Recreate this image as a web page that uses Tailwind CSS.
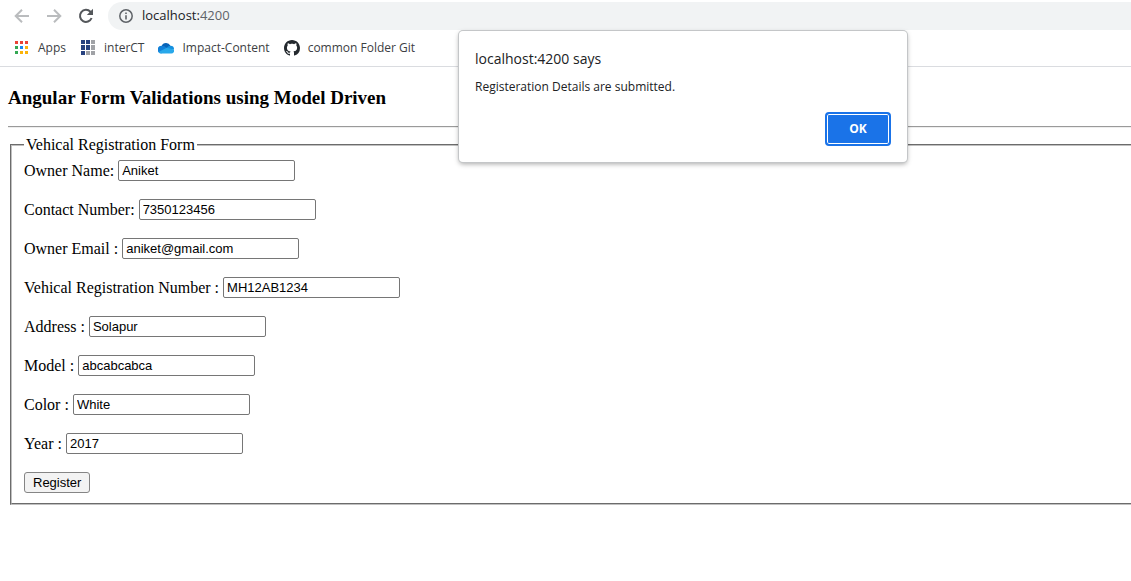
<!DOCTYPE html>
<html lang="en">
<head>
<meta charset="utf-8">
<title>localhost:4200</title>
<script src="https://cdn.jsdelivr.net/npm/@tailwindcss/browser@4"></script>
</head>
<body class="bg-white text-black overflow-x-hidden">
<header class="border-b border-[#dadce0] font-['Segoe_UI','Open_Sans',sans-serif] text-xs text-[#3c4043]">
  <nav class="flex items-center pt-0.5 pl-3.5" aria-label="Browser toolbar">
    <button class="mr-4 size-4" aria-label="Back"><svg viewBox="0 0 16 16" class="size-4 fill-none stroke-[#babcbe] stroke-2"><path d="M15 8H2M8 1.7L1.7 8L8 14.3"/></svg></button>
    <button class="mr-4 size-4" aria-label="Forward"><svg viewBox="0 0 16 16" class="size-4 fill-none stroke-[#babcbe] stroke-2"><path d="M1 8H14M8 1.7L14.3 8L8 14.3"/></svg></button>
    <button class="mr-3.5 size-4" aria-label="Reload"><svg viewBox="0 0 16 16" class="size-4"><path d="M13.6 10A6 6 0 1 1 12.4 3.8L13.2 4.8" fill="none" stroke="#54575b" stroke-width="2"/><path d="M15 .8V7H8.8Z" fill="#54575b"/></svg></button>
    <div class="flex h-7 flex-1 items-center gap-2 rounded-l-full bg-[#f1f3f4] pl-2.5">
      <svg viewBox="0 0 16 16" class="size-4" aria-hidden="true"><circle cx="8" cy="8" r="6.2" fill="none" stroke="#5f6368" stroke-width="1.5"/><path d="M7.2 7.2h1.6v4.3H7.2zM7.2 4.4h1.6V6H7.2z" fill="#5f6368"/></svg>
      <span class="text-[13px] text-[#202124]">localhost:<span class="text-[#5f6368]">4200</span></span>
    </div>
  </nav>
  <nav class="flex h-9 items-center gap-3.5 pl-3.5" aria-label="Bookmarks">
    <a href="#" class="flex items-center gap-2">
      <svg viewBox="0 0 16 16" class="size-4" shape-rendering="crispEdges"><path fill="#ea4335" d="M1 1h3v3H1zM6 1h3v3H6zM11 1h3v3h-3z"/><path fill="#34a853" d="M1 6h3v3H1zM1 11h3v3H1z"/><path fill="#1a87f0" d="M6 6h3v3H6z"/><path fill="#fbb30a" d="M11 6h3v3h-3zM6 11h3v3H6zM11 11h3v3h-3z"/></svg>Apps</a>
    <a href="#" class="flex items-center gap-2">
      <svg viewBox="0 0 16 16" class="size-4" shape-rendering="crispEdges"><path fill="#27427f" d="M1 0h4v4H1zM6 0h4v4H6zM1 5h4v5H1zM6 5h4v5H6zM1 11h4v4H1z"/><path fill="#a0a2a6" d="M11 0h4v4h-4zM11 5h4v5h-4zM6 11h4v4H6zM11 11h4v4h-4z"/></svg>interCT</a>
    <a href="#" class="flex items-center gap-2">
      <svg viewBox="0 0 16 16" class="size-4"><path fill="#0864b8" d="M3.6 6.2A4.8 4.8 0 0 1 12.4 5.8L8 9.5Z"/><path fill="#1280d8" d="M3.4 13.4A3.8 3.8 0 0 1 3.6 5.8Q6.2 5.6 8.5 7.8L10 10L3 13.4Z"/><path fill="#1490df" d="M8.6 8Q10.2 5.7 12.6 5.8A3.6 3.6 0 0 1 16 9.6L10 10Z"/><path fill="#28a8ea" d="M.6 11.9L8.7 7.8L15.9 9.6A2.8 2.8 0 0 1 13.3 13.6H3.6Q1.6 13.6 .6 11.9Z"/></svg>Impact-Content</a>
    <a href="#" class="flex items-center gap-2">
      <svg viewBox="0 0 16 16" class="size-4"><path fill="#24292e" d="M8 0C3.58 0 0 3.58 0 8c0 3.54 2.29 6.53 5.47 7.59.4.07.55-.17.55-.38 0-.19-.01-.82-.01-1.49-2.01.37-2.53-.49-2.69-.94-.09-.23-.48-.94-.82-1.13-.28-.15-.68-.52-.01-.53.63-.01 1.08.58 1.23.82.72 1.21 1.87.87 2.33.66.07-.52.28-.87.51-1.07-1.78-.2-3.64-.89-3.64-3.95 0-.87.31-1.59.82-2.15-.08-.2-.36-1.02.08-2.12 0 0 .67-.21 2.2.82.64-.18 1.32-.27 2-.27s1.36.09 2 .27c1.53-1.04 2.2-.82 2.2-.82.44 1.1.16 1.92.08 2.12.51.56.82 1.27.82 2.15 0 3.07-1.87 3.75-3.65 3.95.29.25.54.73.54 1.48 0 1.07-.01 1.93-.01 2.2 0 .21.15.46.55.38A8.01 8.01 0 0 0 16 8c0-4.42-3.58-8-8-8z"/></svg>common Folder Git</a>
  </nav>
</header>

<main class="-mr-4 pt-5 pl-2 font-['Liberation_Serif',serif] text-base leading-[18px]">
  <h3 class="text-[19px] leading-[21px] font-bold">Angular Form Validations using Model Driven</h3>
  <hr class="mt-[18px] mb-2 border-t border-b border-t-[#9a9a9a] border-b-[#eeeeee]">
  <form>
    <fieldset class="ml-0.5 border-2 border-[#c0c0c0] [border-style:groove] px-3 pb-2.5">
      <legend class="px-0.5">Vehical Registration Form</legend>
      <div class="flex flex-col items-start gap-[18px] pt-1.5 [&_input]:h-[21px] [&_input]:w-[177px] [&_input]:rounded-xs [&_input]:border [&_input]:border-[#767676] [&_input]:px-[3px] [&_input]:font-['Liberation_Sans',sans-serif] [&_input]:text-[13px] [&_label]:flex [&_label]:items-center [&_label]:gap-1">
        <label>Owner Name: <input type="text" value="Aniket"></label>
        <label>Contact Number: <input type="text" value="7350123456"></label>
        <label>Owner Email : <input type="text" value="aniket@gmail.com"></label>
        <label>Vehical Registration Number : <input type="text" value="MH12AB1234"></label>
        <label>Address : <input type="text" value="Solapur"></label>
        <label>Model : <input type="text" value="abcabcabca"></label>
        <label>Color : <input type="text" value="White"></label>
        <label>Year : <input type="text" value="2017"></label>
        <button type="button" class="h-[21px] rounded-[3px] border border-[#858585] bg-[#f3f3f3] px-2 font-['Liberation_Sans',sans-serif] text-[13px]">Register</button>
      </div>
    </fieldset>
  </form>
</main>

<div role="alertdialog" aria-labelledby="alert-title" aria-describedby="alert-text" class="absolute top-[31px] left-[459px] w-[448px] rounded-sm bg-white px-4 pt-[18px] pb-4 font-['Segoe_UI','Open_Sans',sans-serif] text-[#202124] shadow-[0_0_0_1px_#c4c6c8,0_2px_5px_rgba(0,0,0,0.35)]">
  <h2 id="alert-title" class="text-sm">localhost:4200 says</h2>
  <p id="alert-text" class="mt-2 text-xs leading-5">Registeration Details are submitted.</p>
  <div class="mt-[15px] flex justify-end">
    <button class="h-[34px] w-[66px] rounded-sm border-2 border-[#1a73e8] bg-[#1a73e8] text-xs font-bold text-white shadow-[inset_0_0_0_1px_white]">OK</button>
  </div>
</div>
</body>
</html>
